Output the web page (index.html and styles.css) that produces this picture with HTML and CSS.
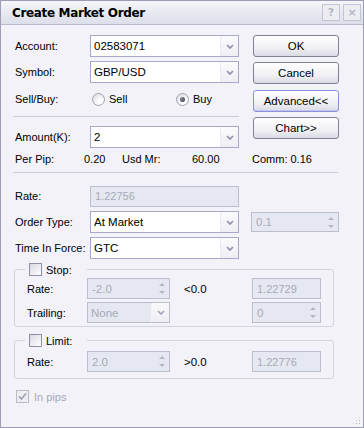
FILE: index.html
```html
<!DOCTYPE html>
<html lang="en">
<head>
    <meta charset="UTF-8">
    <title>Create Market Order</title>
    <link rel="stylesheet" href="styles.css">
</head>
<body>
<div class="window">
    <div class="titlebar">
        <span class="title">Create Market Order</span>
        <div class="caption">
            <span class="cap-btn">?</span>
            <span class="cap-btn">&#215;</span>
        </div>
    </div>

    <div class="content">
        <div class="top">
            <div class="left">
                <div class="row">
                    <span class="label">Account:</span>
                    <div class="combo">
                        <span class="val">02583071</span>
                        <span class="drop"><svg width="8" height="5" viewBox="0 0 8 5"><path d="M1 1l3 3 3-3" fill="none" stroke="#8e90ad" stroke-width="1.7"/></svg></span>
                    </div>
                </div>
                <div class="row">
                    <span class="label">Symbol:</span>
                    <div class="combo">
                        <span class="val">GBP/USD</span>
                        <span class="drop"><svg width="8" height="5" viewBox="0 0 8 5"><path d="M1 1l3 3 3-3" fill="none" stroke="#8e90ad" stroke-width="1.7"/></svg></span>
                    </div>
                </div>
                <div class="row sellbuy">
                    <span class="label">Sell/Buy:</span>
                    <div class="radios">
                        <span class="opt"><span class="radio"></span>Sell</span>
                        <span class="opt"><span class="radio on"></span>Buy</span>
                    </div>
                </div>
                <div class="sep"></div>
                <div class="row">
                    <span class="label">Amount(K):</span>
                    <div class="combo">
                        <span class="val">2</span>
                        <span class="drop"><svg width="8" height="5" viewBox="0 0 8 5"><path d="M1 1l3 3 3-3" fill="none" stroke="#8e90ad" stroke-width="1.7"/></svg></span>
                    </div>
                </div>
            </div>
            <div class="buttons">
                <button class="btn">OK</button>
                <button class="btn">Cancel</button>
                <button class="btn focus">Advanced&lt;&lt;</button>
                <button class="btn">Chart&gt;&gt;</button>
            </div>
        </div>

        <div class="pips">
            <span>Per Pip:</span>
            <span>0.20</span>
            <span>Usd Mr:</span>
            <span>60.00</span>
            <span>Comm: 0.16</span>
        </div>
        <div class="sep wide"></div>

        <div class="row rate">
            <span class="label">Rate:</span>
            <div class="box off">1.22756</div>
        </div>
        <div class="row">
            <span class="label">Order Type:</span>
            <div class="combo">
                <span class="val">At Market</span>
                <span class="drop"><svg width="8" height="5" viewBox="0 0 8 5"><path d="M1 1l3 3 3-3" fill="none" stroke="#8e90ad" stroke-width="1.7"/></svg></span>
            </div>
            <div class="spin off side">
                <span class="val">0.1</span>
                <span class="arrows"><i class="up"></i><i class="down"></i></span>
            </div>
        </div>
        <div class="row">
            <span class="label">Time In Force:</span>
            <div class="combo">
                <span class="val">GTC</span>
                <span class="drop"><svg width="8" height="5" viewBox="0 0 8 5"><path d="M1 1l3 3 3-3" fill="none" stroke="#8e90ad" stroke-width="1.7"/></svg></span>
            </div>
        </div>

        <fieldset class="group stop">
            <legend><span class="check"></span>Stop:</legend>
            <div class="grow">
                <span class="label">Rate:</span>
                <div class="spin off">
                    <span class="val">-2.0</span>
                    <span class="arrows"><i class="up"></i><i class="down"></i></span>
                </div>
                <span class="cond">&lt;0.0</span>
                <div class="box off small">1.22729</div>
            </div>
            <div class="grow">
                <span class="label">Trailing:</span>
                <div class="combo off">
                    <span class="val">None</span>
                    <span class="drop"><svg width="8" height="5" viewBox="0 0 8 5"><path d="M1 1l3 3 3-3" fill="none" stroke="#a3a5bb" stroke-width="1.7"/></svg></span>
                </div>
                <span class="cond"></span>
                <div class="spin off small">
                    <span class="val">0</span>
                    <span class="arrows"><i class="up"></i><i class="down"></i></span>
                </div>
            </div>
        </fieldset>

        <fieldset class="group limit">
            <legend><span class="check"></span>Limit:</legend>
            <div class="grow">
                <span class="label">Rate:</span>
                <div class="spin off">
                    <span class="val">2.0</span>
                    <span class="arrows"><i class="up"></i><i class="down"></i></span>
                </div>
                <span class="cond">&gt;0.0</span>
                <div class="box off small">1.22776</div>
            </div>
        </fieldset>

        <div class="inpips">
            <span class="check checked"><svg width="11" height="11" viewBox="0 0 11 11"><path d="M2 5.5l2.5 2.5 4.5-5.5" fill="none" stroke="#a4a6b6" stroke-width="1.8"/></svg></span>
            In pips
        </div>
    </div>

    <div class="grip"></div>
</div>
</body>
</html>
```

FILE: styles.css
```css
* {
    box-sizing: border-box;
}
body {
    margin: 0;
    font-family: "Liberation Sans", Arial, sans-serif;
    font-size: 11px;
    color: #000;
}
.window {
    position: relative;
    width: 364px;
    height: 428px;
    border: 1px solid #9c9eb6;
    background: #f2f2f8;
}
.titlebar {
    height: 24px;
    display: flex;
    align-items: center;
    justify-content: space-between;
    padding: 0 2px 0 11px;
    background: linear-gradient(#f5f5fa, #dcdee9);
    border-bottom: 1px solid #b9bbcd;
}
.title {
    font-family: "DejaVu Sans", sans-serif;
    font-weight: bold;
    font-size: 12px;
    letter-spacing: -0.35px;
    padding-top: 1px;
}
.caption {
    display: flex;
    gap: 3px;
}
.cap-btn {
    width: 18px;
    height: 17px;
    border: 1px solid #c3c5d4;
    background: #ecedf3;
    color: #b3b5c6;
    font-family: "DejaVu Sans", sans-serif;
    font-weight: bold;
    font-size: 11px;
    display: flex;
    align-items: center;
    justify-content: center;
}
.content {
    padding: 10px 0 0 13px;
}
.top {
    display: flex;
}
.left {
    width: 225px;
}
.row {
    display: flex;
    align-items: center;
    height: 22px;
    margin-bottom: 4px;
}
.label {
    width: 76px;
    flex: none;
    padding-left: 1px;
}
.combo {
    width: 149px;
    height: 22px;
    flex: none;
    display: flex;
    align-items: center;
    border: 1px solid #a7a9cb;
    background: #fff;
}
.combo .val {
    flex: 1;
    padding-left: 3px;
    font-size: 11.5px;
}
.drop {
    width: 18px;
    height: 100%;
    display: flex;
    align-items: center;
    justify-content: center;
    border-left: 1px solid #ebebf2;
    background: linear-gradient(#fbfbfd, #eeeef4);
}
.combo.off {
    width: 83px;
    height: 21px;
    background: #e6e8f1;
    border-color: #bcbecd;
    color: #a7a9b8;
}
.combo.off .drop {
    border-left-color: #f4f4f8;
    background: linear-gradient(#fafafc, #eeeef3);
}
.sellbuy {
    margin-top: 5px;
}
.radios {
    display: flex;
    padding-left: 2px;
}
.opt {
    display: flex;
    align-items: center;
    gap: 4px;
    width: 84px;
}
.radio {
    position: relative;
    width: 13px;
    height: 13px;
    border-radius: 50%;
    border: 1px solid #a3a4b2;
    background: radial-gradient(circle at 65% 70%, #ffffff 20%, #d9d9e0 90%);
}
.radio.on::after {
    content: "";
    position: absolute;
    left: 3px;
    top: 3px;
    width: 5px;
    height: 5px;
    border-radius: 50%;
    background: radial-gradient(circle at 35% 35%, #8a8c9c, #2e3040);
}
.sep {
    height: 1px;
    background: #c9cad8;
    margin: 6px 0 9px -1px;
}
.sep.wide {
    width: 325px;
    margin: 6px 0 12px -1px;
}
.buttons {
    display: flex;
    flex-direction: column;
    margin-left: 14px;
}
.btn {
    width: 86px;
    height: 22px;
    margin-bottom: 5px;
    font-family: "Liberation Sans", Arial, sans-serif;
    font-size: 11.5px;
    color: #000;
    border: 1px solid #7f8196;
    border-radius: 3px;
    background: linear-gradient(#ffffff, #f1f1f5 60%, #d9dae4);
}
.btn.focus {
    margin-top: 1px;
    border-color: #8b8fdc;
    box-shadow: inset 0 -1px 0 #c4c6f0;
}
.pips {
    display: grid;
    grid-template-columns: 69px 38px 70px 60px auto;
    padding-left: 1px;
    margin-top: 1px;
    height: 13px;
}
.box {
    width: 149px;
    height: 21px;
    flex: none;
    display: flex;
    align-items: center;
    padding-left: 4px;
    border: 1px solid #bcbecd;
}
.off {
    background: #e6e8f1;
    color: #a7a9b8;
}
.box.off {
    border-color: #bcbecd;
}
.box.small {
    width: 69px;
}
.spin {
    width: 83px;
    height: 21px;
    display: flex;
    align-items: center;
    border: 1px solid #bcbecd;
    font-size: 11.5px;
}
.spin .val {
    flex: 1;
    padding-left: 4px;
}
.spin.side {
    width: 88px;
    height: 20px;
    margin-left: 12px;
}
.spin.small {
    width: 69px;
}
.arrows {
    width: 14px;
    display: flex;
    flex-direction: column;
    align-items: center;
    gap: 5px;
}
.arrows i {
    width: 0;
    height: 0;
    border-left: 3px solid transparent;
    border-right: 3px solid transparent;
}
.arrows .up {
    border-bottom: 3px solid #b3b5c4;
}
.arrows .down {
    border-top: 3px solid #b3b5c4;
}
.group {
    width: 320px;
    margin: 4px 0 0 0;
    padding: 2px 12px 3px 12px;
    border: 1px solid #d3d4e0;
    border-radius: 3px;
}
.group legend {
    width: 62px;
    display: flex;
    align-items: center;
    gap: 4px;
    padding: 0 0 0 4px;
    margin-left: -2px;
    height: 13px;
}
.check {
    width: 13px;
    height: 13px;
    flex: none;
    border: 1px solid #8e90a8;
    background: linear-gradient(135deg, #d8d9e2, #ffffff);
}
.grow {
    display: grid;
    grid-template-columns: 60px 83px 82px 69px;
    align-items: center;
    height: 21px;
    margin-bottom: 3px;
}
.grow:last-child {
    margin-bottom: 0;
}
.grow .label {
    width: auto;
    padding-left: 0;
}
.cond {
    padding-left: 14px;
    font-size: 11.5px;
}
.limit {
    margin-top: 7px;
    padding-top: 4px;
    padding-bottom: 6px;
}
.inpips {
    display: flex;
    align-items: center;
    gap: 5px;
    margin-top: 11px;
    margin-left: 2px;
    color: #a7a9b8;
}
.check.checked {
    border-color: #b9bbc9;
    background: #eceef4;
    display: flex;
    align-items: center;
    justify-content: center;
}
.grip {
    position: absolute;
    right: 2px;
    bottom: 2px;
    width: 9px;
    height: 9px;
    background:
        radial-gradient(circle, #b0b2c2 1px, transparent 1px) 0 0 / 3px 3px;
    clip-path: polygon(100% 0, 100% 100%, 0 100%);
}
```
